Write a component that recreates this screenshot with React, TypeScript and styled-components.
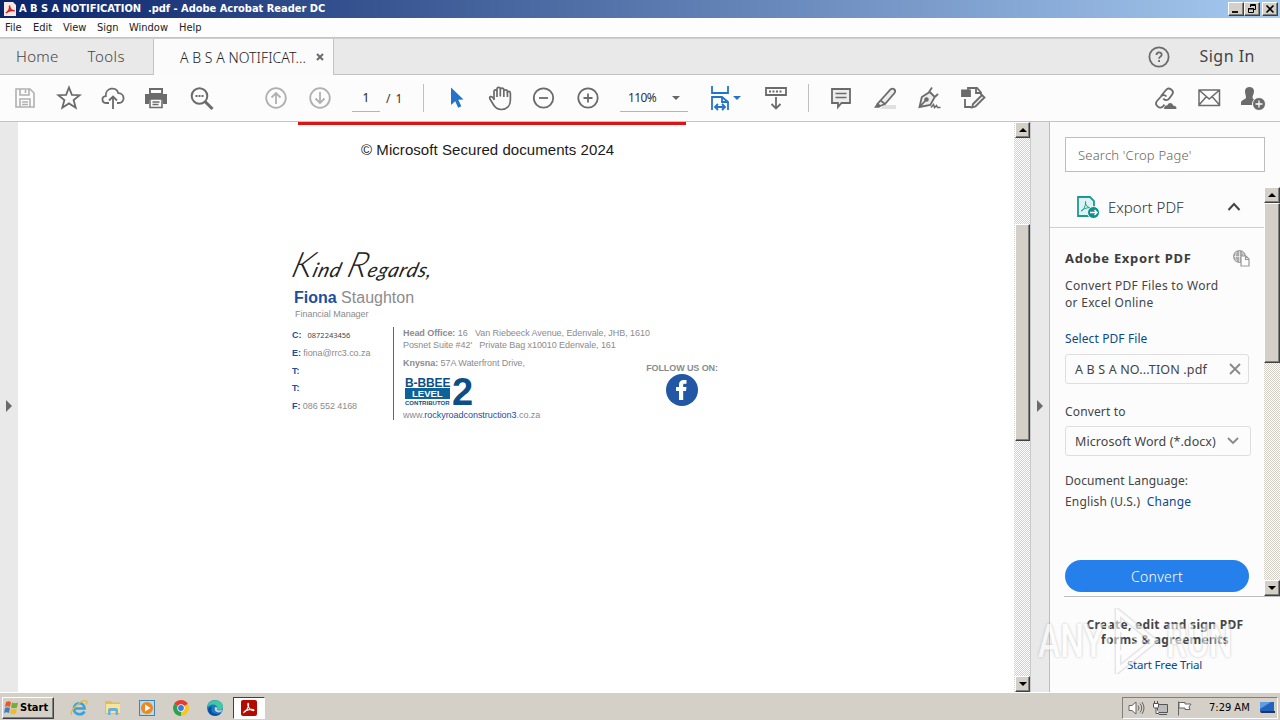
import React, { FC, ReactNode } from 'react';
import styled, { createGlobalStyle, css } from 'styled-components';

const clean = `'Noto Sans', 'Open Sans', sans-serif`;
const tahoma = `'DejaVu Sans Condensed', 'DejaVu Sans', sans-serif`;
const arial = `'Liberation Sans', Arial, sans-serif`;

type TextProps = { $track?: number };

const tracking = css<TextProps>`
  letter-spacing: ${({ $track = 0 }) => $track}px;
`;

const GlobalStyle = createGlobalStyle`
  * {
    box-sizing: border-box;
  }
  body {
    margin: 0;
    overflow: hidden;
    background: #fff;
    font-family: ${clean};
    color: #4b4b4b;
  }
  svg {
    display: block;
    flex: none;
  }
  button {
    padding: 0;
    border: 0;
    background: none;
    font: inherit;
    color: inherit;
  }
`;

const Screen = styled.div`
  position: relative;
  width: 1280px;
  height: 720px;
  display: flex;
  flex-direction: column;
  white-space: pre;
`;

/* window chrome */

const TitleBar = styled.header`
  height: 18px;
  display: flex;
  align-items: center;
  padding: 0 2px 0 4px;
  background: linear-gradient(90deg, #0a246a, #a6caf0);
`;

const TitleText = styled.div<TextProps>`
  flex: 1;
  margin-left: 3px;
  font: bold 11px/18px ${tahoma};
  color: #fff;
  ${tracking}
`;

const raised = css`
  background: #d4d0c8;
  border: 1px solid;
  border-color: #fff #404040 #404040 #fff;
  box-shadow: inset -1px -1px 0 #808080;
`;

const WindowButton = styled.button<{ $gap?: boolean }>`
  ${raised}
  width: 16px;
  height: 14px;
  margin-left: ${({ $gap }) => ($gap ? 2 : 0)}px;
  display: flex;
  align-items: center;
  justify-content: center;
`;

const MenuBar = styled.nav`
  height: 20px;
  display: flex;
  padding-left: 5px;
  background: #fdfdfd;
  border-bottom: 1px solid #c4c4c4;
`;

const MenuItem = styled.span<TextProps & { $width: number }>`
  width: ${({ $width }) => $width}px;
  font: 11px/20px ${tahoma};
  color: #222;
  ${tracking}
`;

const TabBar = styled.nav`
  height: 37px;
  display: flex;
  background: #e9e9e9;
  border-top: 1px solid #cfcfcf;
`;

const NavTabs = styled.div`
  width: 154px;
  display: flex;
  gap: 29px;
  padding-left: 16px;
  border-right: 1px solid #c3c3c3;
  border-bottom: 1px solid #c3c3c3;
`;

const NavTab = styled.span<TextProps>`
  font-size: 15px;
  line-height: 35px;
  color: #444;
  font-weight: 300;
  ${tracking}
`;

const ActiveTab = styled.div`
  width: 180px;
  display: flex;
  align-items: center;
  justify-content: space-between;
  padding: 0 9px 0 26px;
  background: #fbfbfb;
  border-right: 1px solid #c3c3c3;
`;

const ActiveTabName = styled.span<TextProps>`
  font-size: 14px;
  line-height: 35px;
  color: #222;
  font-weight: 300;
  ${tracking}
`;

const TabBarRight = styled.div`
  flex: 1;
  display: flex;
  align-items: center;
  justify-content: flex-end;
  gap: 29px;
  padding-right: 25px;
  border-bottom: 1px solid #c3c3c3;
`;

const SignIn = styled.span<TextProps>`
  font-size: 16px;
  line-height: 35px;
  color: #444;
  ${tracking}
`;

/* toolbar */

const ToolBar = styled.div`
  height: 47px;
  display: flex;
  align-items: center;
  padding: 0 5px 0 3px;
  background: #fcfcfc;
  border-bottom: 1px solid #c3c3c3;
`;

const Tool = styled.button<{ $left?: number }>`
  width: 44px;
  height: 44px;
  margin-left: ${({ $left = 0 }) => $left}px;
  display: flex;
  align-items: center;
  justify-content: center;
`;

const PageField = styled.span`
  width: 28px;
  height: 28px;
  margin-left: 10px;
  border-bottom: 1px solid #b5b5b5;
  font-size: 12px;
  line-height: 28px;
  text-align: center;
  color: #222;
`;

const PageTotal = styled.span`
  width: 37px;
  margin-left: 6px;
  font-size: 12px;
  letter-spacing: 1px;
  color: #333;
`;

const Separator = styled.span<{ $left?: number }>`
  width: 1px;
  height: 28px;
  margin-left: ${({ $left = 0 }) => $left}px;
  margin-right: 10px;
  background: #c0c0c0;
`;

const ZoomField = styled.div`
  width: 68px;
  height: 28px;
  margin-left: 10px;
  padding: 0 8px;
  display: flex;
  align-items: center;
  justify-content: space-between;
  border-bottom: 1px solid #b5b5b5;
  font-size: 12px;
  letter-spacing: -0.6px;
  color: #333;
`;

const Caret = styled.span<{ $color?: string }>`
  border: 4px solid transparent;
  border-top-color: ${({ $color = '#666' }) => $color};
  border-bottom: 0;
`;

const Spacer = styled.span`
  flex: 1;
`;

/* document area */

const Workspace = styled.main`
  height: 570px;
  display: flex;
`;

const Gutter = styled.div<{ $side: 'left' | 'right' }>`
  width: ${({ $side }) => ($side === 'left' ? 18 : 19)}px;
  display: flex;
  align-items: center;
  justify-content: center;
  background: #e9e9e9;
  ${({ $side }) => $side === 'right' && 'border-right: 1px solid #bdbdbd;'}

  &::after {
    content: '';
    margin-top: -2px;
    border: 6px solid transparent;
    border-left-color: #6b6b6b;
    border-right: 0;
  }
`;

const Page = styled.article`
  width: 996px;
  background: #fff;
`;

const RedRule = styled.div`
  width: 388px;
  height: 3px;
  margin-left: 280px;
  background: #e01212;
`;

const Copyright = styled.p<TextProps>`
  margin: 15px 0 0 343px;
  font: 15px/20px ${arial};
  color: #1a1a1a;
  ${tracking}
`;

const Signature = styled.section`
  margin: 83px 0 0 273px;
  font-family: ${arial};
  color: #8b8b8d;
`;

const Handwriting = styled.div<TextProps>`
  height: 40px;
  width: max-content;
  padding-left: 3px;
  font: italic 400 20px/40px Lato, ${arial};
  color: #222;
  transform: skewX(-16deg);
  ${tracking}
`;

const Initial = styled.span`
  font-size: 35px;
  font-weight: 300;
`;

const SignerName = styled.div<TextProps>`
  margin: 5px 0 0 3px;
  font-size: 16px;
  line-height: 20px;
  ${tracking}

  b {
    color: #1a4fa0;
  }
`;

const SignerRole = styled.div<TextProps>`
  margin-left: 4px;
  font-size: 9px;
  line-height: 12px;
  ${tracking}
`;

const SignatureColumns = styled.div`
  height: 93px;
  margin-top: 7px;
  display: flex;
`;

const Contacts = styled.div`
  width: 103px;
  padding-left: 1px;
  border-right: 1px solid #66666a;
`;

const Contact = styled.div<TextProps>`
  height: 17.8px;
  font-size: 9px;
  line-height: 17.8px;
  ${tracking}

  b {
    color: #1a4fa0;
  }
`;

const PhoneNumber = styled.span`
  margin-left: 6px;
  font: 7.5px ${clean};
  letter-spacing: 0;
  color: #444;
`;

const Offices = styled.div`
  width: 252px;
  padding-left: 9px;
`;

const OfficeLine = styled.div<TextProps & { $top?: number }>`
  margin-top: ${({ $top = 0 }) => $top}px;
  font-size: 9px;
  line-height: 12px;
  ${tracking}
`;

const WebsiteName = styled.span`
  color: #1a4fa0;
`;

const Badge = styled.div`
  height: 31px;
  margin: 7px 0 2px 2px;
  display: flex;
  gap: 2px;
  font-weight: bold;
  color: #0c4f86;
`;

const BadgeWords = styled.div`
  width: 45px;
  display: flex;
  flex-direction: column;
`;

const BadgeTitle = styled.span<TextProps>`
  height: 12px;
  font-size: 12px;
  line-height: 14px;
  ${tracking}
`;

const BadgeLevel = styled.span`
  height: 11px;
  padding-left: 7px;
  background: #0e6199;
  color: #fff;
  font-size: 9.5px;
  line-height: 11px;
`;

const BadgeNote = styled.span<TextProps>`
  font-size: 6px;
  line-height: 8px;
  ${tracking}
`;

const BadgeNumber = styled.span`
  font-size: 38px;
  line-height: 33px;
  letter-spacing: -1px;
`;

const Follow = styled.div<TextProps>`
  width: 72px;
  margin-top: 35px;
  display: flex;
  flex-direction: column;
  align-items: center;
  font-size: 9px;
  font-weight: bold;
  line-height: 12px;
  ${tracking}
`;

/* scrollbars */

const Track = styled.div<{ $height?: number }>`
  width: ${({ $height }) => ($height ? 16 : 17)}px;
  height: ${({ $height = 570 }) => $height}px;
  padding-left: ${({ $height }) => ($height ? 0 : 1)}px;
  border-right: ${({ $height }) => ($height ? 0 : 1)}px solid #c9c9c9;
  display: flex;
  flex-direction: column;
  background: repeating-conic-gradient(#d4d0c8 0 25%, #fff 0 50%) 0 0 / 2px 2px;
`;

const ArrowButton = styled.button<{ $down?: boolean }>`
  ${raised}
  height: 16px;
  display: flex;
  align-items: center;
  justify-content: center;

  &::after {
    content: '';
    border: 4px solid transparent;
    ${({ $down }) =>
      $down
        ? 'border-top-color: #000; border-bottom: 0;'
        : 'border-bottom-color: #000; border-top: 0;'}
  }
`;

const Thumb = styled.div<{ $top: number; $height: number }>`
  ${raised}
  margin-top: ${({ $top }) => $top}px;
  height: ${({ $height }) => $height}px;
`;

/* tools pane */

const Pane = styled.aside`
  flex: 1;
  display: flex;
  flex-direction: column;
  background: #fcfcfc;
`;

const SearchBox = styled.div<TextProps>`
  width: 200px;
  height: 35px;
  margin: 15px 0 15px 15px;
  padding-left: 12px;
  border: 1px solid #bdbdbd;
  background: #fff;
  font-size: 13px;
  line-height: 34px;
  font-weight: 300;
  color: #666;
  ${tracking}
`;

const PaneBody = styled.div`
  height: 409px;
  display: flex;
`;

const PaneContent = styled.div`
  width: 214px;
`;

const PaneHeader = styled.div<TextProps>`
  height: 41px;
  display: flex;
  align-items: center;
  padding: 0 23px 0 26px;
  border-bottom: 1px solid #cfcfcf;
  font-size: 15px;
  font-weight: 300;
  color: #333;
  ${tracking}

  span {
    flex: 1;
    margin-left: 8px;
  }
`;

const ExportForm = styled.div`
  padding: 20px 0 0 15px;
`;

const FormHeading = styled.div<TextProps>`
  width: 185px;
  display: flex;
  align-items: center;
  justify-content: space-between;
  font-size: 13px;
  font-weight: bold;
  line-height: 20px;
  color: #3d3d3d;
  ${tracking}
`;

const FormText = styled.div<TextProps & { $top: number }>`
  margin-top: ${({ $top }) => $top}px;
  font-size: 12px;
  line-height: 17px;
  color: #444;
  ${tracking}
`;

const Link = styled.a`
  color: #0b4a8c;
`;

const FormBox = styled.div<TextProps & { $width: number; $top: number }>`
  width: ${({ $width }) => $width}px;
  height: 30px;
  margin-top: ${({ $top }) => $top}px;
  padding: 0 7px 0 9px;
  display: flex;
  align-items: center;
  justify-content: space-between;
  border: 1px solid #dedede;
  border-radius: 3px;
  font-size: 12.5px;
  color: #444;
  ${tracking}
`;

const ConvertButton = styled.button`
  display: block;
  width: 184px;
  height: 32px;
  margin-top: 50px;
  border-radius: 16px;
  background: #2680eb;
  color: #fff;
  font-size: 14px;
  font-weight: 300;
  letter-spacing: 0.3px;
`;

const PaneFooter = styled.div`
  margin-left: 14px;
  padding: 20px 0 0 1px;
  width: 216px;
  flex: 1;
  border-top: 1px solid #bdbdbd;
`;

const FooterPitch = styled.div<TextProps>`
  width: 200px;
  text-align: center;
  font-size: 12px;
  font-weight: bold;
  line-height: 15px;
  color: #444;
  ${tracking}
`;

const FooterLink = styled(Link)<TextProps>`
  display: block;
  width: 199px;
  margin-top: 9px;
  text-align: center;
  font-size: 11.5px;
  line-height: 18px;
  ${tracking}
`;

const Watermark = styled.div`
  position: absolute;
  left: 1038px;
  top: 608px;
  width: 194px;
  height: 66px;
  display: flex;
  align-items: center;
  justify-content: space-between;
  pointer-events: none;
  opacity: 0.6;
`;

const WatermarkWord = styled.span<{ $width: number }>`
  width: ${({ $width }) => $width}px;
  font: 500 47px/66px Roboto, sans-serif;
  color: #fff;
  text-shadow: 0 0 3px #999;
  transform: scaleX(0.71);
  transform-origin: left;
`;

/* taskbar */

const TaskBar = styled.footer`
  height: 28px;
  display: flex;
  align-items: center;
  padding: 2px 2px 0;
  background: #d4d0c8;
  border-top: 1px solid #fff;
`;

const StartButton = styled.button`
  ${raised}
  width: 52px;
  height: 22px;
  margin-right: 8px;
  display: flex;
  align-items: center;
  gap: 1px;
  font: bold 11px ${tahoma};
  color: #000;
`;

const TaskIcon = styled.button`
  width: 34px;
  display: flex;
  justify-content: center;
`;

const ActiveTask = styled.button`
  width: 32px;
  height: 22px;
  margin-left: 1px;
  display: flex;
  align-items: center;
  justify-content: center;
  background: #fff;
  border: 1px solid;
  border-color: #404040 #fff #fff #404040;
`;

const Tray = styled.div`
  width: 156px;
  height: 22px;
  padding: 0 2px 0 5px;
  display: flex;
  align-items: center;
  gap: 7px;
  border: 1px solid;
  border-color: #808080 #fff #fff #808080;
`;

const Clock = styled.span`
  flex: 1;
  padding-left: 9px;
  font: 11px ${tahoma};
  color: #000;
`;

type IconProps = { w?: number; h?: number; color?: string; stroke?: number; children: ReactNode };

const Icon: FC<IconProps> = ({ w = 26, h = 26, color = '#6b6b6b', stroke = 1.8, children }) => (
  <svg width={w} height={h} viewBox={`0 0 ${w} ${h}`} fill="none" stroke={color} strokeWidth={stroke}>
    {children}
  </svg>
);

const App: FC = () => {
  return (
    <>
      <GlobalStyle />
      <Screen>
        <TitleBar>
          <svg width="12" height="16" viewBox="0 0 12 16">
            <path d="M0 1h9l3 3v11H0z" fill="#f6e8e6" />
            <path
              d="M2 12C5 10 6 7 5.500 4.500M5.500 5C6 8 8 10 10.500 9.800 8 8.800 4 10 2 12"
              fill="none"
              stroke="#d2231a"
              strokeWidth="1.500"
            />
          </svg>
          <TitleText $track={-0.02}>A B S A NOTIFICATION  .pdf - Adobe Acrobat Reader DC</TitleText>
          <WindowButton>
            <Icon w={10} h={10} color="#000">
              <path d="M1 8h6" />
            </Icon>
          </WindowButton>
          <WindowButton>
            <Icon w={10} h={10} color="#000" stroke={1}>
              <path d="M3.500 3V.5h5v5H7M3 1.500h6M1.500 4.500h5v4h-5zM1 5h6" />
            </Icon>
          </WindowButton>
          <WindowButton $gap>
            <Icon w={10} h={10} color="#000" stroke={1.6}>
              <path d="m1.500 1.500 7 7m0-7-7 7" />
            </Icon>
          </WindowButton>
        </TitleBar>
        <MenuBar>
          <MenuItem $width={28}>File</MenuItem>
          <MenuItem $width={30}>Edit</MenuItem>
          <MenuItem $width={34}>View</MenuItem>
          <MenuItem $width={32}>Sign</MenuItem>
          <MenuItem $width={50}>Window</MenuItem>
          <MenuItem $width={30}>Help</MenuItem>
        </MenuBar>
        <TabBar>
          <NavTabs>
            <NavTab $track={0.3}>Home</NavTab>
            <NavTab $track={0.45}>Tools</NavTab>
          </NavTabs>
          <ActiveTab>
            <ActiveTabName $track={0.05}>A B S A NOTIFICAT...</ActiveTabName>
            <Icon w={8} h={8} stroke={2}>
              <path d="m1 1 6 6m0-6-6 6" />
            </Icon>
          </ActiveTab>
          <TabBarRight>
            <Icon w={22} h={22}>
              <circle cx="11" cy="11" r="9.600" />
              <path d="M8.500 9c0-3.500 5.200-3.300 5.200-.3 0 2-2.600 1.900-2.600 4M11.100 14v2" />
            </Icon>
            <SignIn $track={0.5}>Sign In</SignIn>
          </TabBarRight>
        </TabBar>

        <ToolBar>
          <Tool>
            <Icon color="#b0b0b0" stroke={1.6}>
              <path d="M4 4h14l4 4v14H4zM8 4v6h9V4M8 22v-8h10v8M13.500 5v3M10 17h6M10 19.500h6" />
            </Icon>
          </Tool>
          <Tool>
            <Icon>
              <path d="m13 2.500 2.900 7.300 7.800.4-6.100 4.900 2.100 7.600L13 18.400l-6.700 4.300 2.100-7.600-6.100-4.900 7.800-.4z" />
            </Icon>
          </Tool>
          <Tool>
            <Icon>
              <path d="M9 18H6.500C1.500 18 1 11.800 5.800 11.200 5 2.500 16.500 1 18.300 8.200c7 .3 7 9.800.2 9.800H17M13 24V11.500m-4 4 4-4 4 4" />
            </Icon>
          </Tool>
          <Tool>
            <Icon>
              <path d="M5 3h14v5H5zM1 9h22v10h-4v-4H5v4H1z" fill="#6b6b6b" stroke="none" />
              <path d="M6 4h12v5H6z" fill="#fcfcfc" />
              <path d="M6 14h12v8.500H6zM8.500 17h7M8.500 19.500h6" fill="#fcfcfc" strokeWidth="1.600" />
            </Icon>
          </Tool>
          <Tool>
            <Icon stroke={2}>
              <circle cx="11.500" cy="11" r="7.800" />
              <path d="m17 16.500 7.500 7.500" strokeWidth="3" />
              <path d="M7.500 11h8" strokeDasharray="2 1" />
            </Icon>
          </Tool>
          <Tool $left={31}>
            <Icon color="#b0b0b0">
              <circle cx="13" cy="13" r="9.800" />
              <path d="M13 19V8m-4.500 4.500L13 8l4.500 4.500" />
            </Icon>
          </Tool>
          <Tool>
            <Icon color="#b0b0b0">
              <circle cx="13" cy="13" r="9.800" />
              <path d="M13 7v11m-4.500-4.500L13 18l4.500-4.500" />
            </Icon>
          </Tool>
          <PageField>1</PageField>
          <PageTotal>/ 1</PageTotal>
          <Separator />
          <Tool>
            <Icon>
              <path d="m8 2.500 12.500 12-5.300.3 3.200 6.500-3.200 1.500-3-6.600L8 20z" fill="#2273c9" stroke="none" />
            </Icon>
          </Tool>
          <Tool>
            <Icon stroke={1.7}>
              <path d="M7 15V6.500c0-2.300 3-2.300 3 0V12M10 6.500V4c0-2.300 3.300-2.300 3.300 0v7.500M13.300 5c0-2.500 3.500-2.500 3.500 0v7M16.800 6.500c0-2.300 3.600-2.300 3.600 0M20.400 8c0-2.300 3-2 3 .5V15c0 6-3.600 9.500-9.100 9.500-4.500 0-6.300-2-8-5L3 14c-1.300-2.500 1.500-3.300 3-1.300l1.500 2" />
              <path d="M20.400 6.500V12" />
            </Icon>
          </Tool>
          <Tool>
            <Icon>
              <circle cx="12.500" cy="13" r="9.700" />
              <path d="M8 13h9" />
            </Icon>
          </Tool>
          <Tool>
            <Icon>
              <circle cx="13" cy="13" r="9.700" />
              <path d="M8.500 13h9M13 8.500v9" />
            </Icon>
          </Tool>
          <ZoomField>
            110%
            <Caret />
          </ZoomField>
          <Tool $left={14}>
            <Icon color="#2273c9">
              <path d="M5 1v7h16V1M5 25V12h10l6 5v8M15 12v5h6M8 22h10m-7-3-3 3 3 3m4-6 3 3-3 3" />
            </Icon>
            <Caret $color="#2273c9" />
          </Tool>
          <Tool $left={8}>
            <Icon>
              <path d="M3 3h20v7H3zM13 12v11m-4.500-4 4.500 4.500 4.500-4.500" />
              <path d="M6 6.500h14" strokeDasharray="2 1.500" />
            </Icon>
          </Tool>
          <Separator $left={10} />
          <Tool>
            <Icon>
              <path d="M4 4h18v14h-8.500L10 22v-4H4z" fill="#ededed" />
              <path d="M7.500 8.500h11m-11 4h11" strokeWidth="1.500" />
            </Icon>
          </Tool>
          <Tool>
            <Icon>
              <path d="M12 20h12v4H8z" fill="#e0e0e0" stroke="none" />
              <path d="m8.500 15.500 10-11c2.500-2.300 6 .5 4 3.500l-9.500 11zM8.500 15.500 5.500 19l2.500 2 5-2" fill="#ededed" />
              <path d="m5 18.500 3.500 3-1.300 1.300H2z" fill="#6b6b6b" stroke="none" />
            </Icon>
          </Tool>
          <Tool>
            <Icon>
              <path d="M3.500 22 5.800 12l8-5 5 5-4.500 8zM3.500 22l6.500-7M13 7l3-4.500M18.800 12l3.200-3" fill="#ededed" />
              <circle cx="10.500" cy="14.500" r="1.400" fill="#6b6b6b" />
              <path d="m15 22.500 2.500-3 1 3 2-2 1 2h3" strokeWidth="1.500" />
            </Icon>
          </Tool>
          <Tool>
            <Icon>
              <path d="M2 5.500h8V11H2z" fill="#6b6b6b" />
              <path d="M8 6V3h9l4 4.500V10M16 3v5h5M5 14v8h6" />
              <path d="m13 19 9-9 2.500 2.500-9 9-3.500 1z" fill="#ededed" />
            </Icon>
          </Tool>
          <Spacer />
          <Tool>
            <Icon>
              <path d="m9 11 5-6c3-3.500 9 .8 6 4.800l-3 4c-1.500 2-4.500 1.700-5.700-.3M14.500 11.500c-1.500-1.800-4-1.800-5.500 0l-4 4.500c-3 3.800 2.500 8.800 6 5.300l1.500-1.600" />
              <path d="M12 24c0-3 2-4 3.500-3.800 1-3.700 5.500-2.500 5.500.3 3-.2 4.500 3.500 3 3.500z" fill="#6b6b6b" stroke="none" />
            </Icon>
          </Tool>
          <Tool>
            <Icon>
              <path d="M3 5h20.500v15.500H3zM3 5l10.200 9L23.500 5M3 20l7.500-8.500m5.500 0 7.500 8.500" strokeWidth="1.500" />
            </Icon>
          </Tool>
          <Tool>
            <Icon>
              <path
                d="M5 6c0-5.500 9-5.500 9 0 0 3-1.500 4.500-1.500 6.500 0 2 4 2 4 6V20H1v-2c0-3.500 5-3.500 5-5.500S5 9 5 6z"
                fill="#6b6b6b"
                stroke="none"
              />
              <circle cx="19" cy="19" r="6.500" fill="#6b6b6b" stroke="#fcfcfc" strokeWidth="1" />
              <path d="M15.500 19h7M19 15.500v7" stroke="#fff" strokeWidth="1.300" />
            </Icon>
          </Tool>
        </ToolBar>

        <Workspace>
          <Gutter $side="left" />
          <Page>
            <RedRule />
            <Copyright $track={0.06}>© Microsoft Secured documents 2024</Copyright>
            <Signature>
              <Handwriting $track={0.9}>
                <Initial>K</Initial>ind <Initial>R</Initial>egards,
              </Handwriting>
              <SignerName>
                <b>Fiona</b> Staughton
              </SignerName>
              <SignerRole $track={-0.03}>Financial Manager</SignerRole>
              <SignatureColumns>
                <Contacts>
                  <Contact>
                    <b>C:</b>
                    <PhoneNumber>0872243456</PhoneNumber>
                  </Contact>
                  <Contact $track={-0.07}>
                    <b>E:</b> fiona@rrc3.co.za
                  </Contact>
                  <Contact>
                    <b>T:</b>
                  </Contact>
                  <Contact>
                    <b>T:</b>
                  </Contact>
                  <Contact $track={-0.07}>
                    <b>F:</b> 086 552 4168
                  </Contact>
                </Contacts>
                <Offices>
                  <OfficeLine $track={-0.06}>
                    <b>Head Office:</b> 16   Van Riebeeck Avenue, Edenvale, JHB, 1610
                  </OfficeLine>
                  <OfficeLine $track={-0.07}>Posnet Suite #42'   Private Bag x10010 Edenvale, 161</OfficeLine>
                  <OfficeLine $top={6} $track={-0.06}>
                    <b>Knysna:</b> 57A Waterfront Drive,
                  </OfficeLine>
                  <Badge>
                    <BadgeWords>
                      <BadgeTitle $track={-0.1}>B-BBEE</BadgeTitle>
                      <BadgeLevel>LEVEL</BadgeLevel>
                      <BadgeNote $track={0.03}>CONTRIBUTOR</BadgeNote>
                    </BadgeWords>
                    <BadgeNumber>2</BadgeNumber>
                  </Badge>
                  <OfficeLine $track={-0.04}>
                    www.<WebsiteName>rockyroadconstruction3</WebsiteName>.co.za
                  </OfficeLine>
                </Offices>
                <Follow $track={-0.1}>
                  FOLLOW US ON:
                  <svg width="32" height="32" viewBox="0 0 32 32">
                    <circle cx="16" cy="16" r="16" fill="#2257a5" />
                    <path
                      d="M13 26V17h-3v-4h3v-2.500C13 7.500 15 6 17.500 6H20.500v3.800h-2c-1 0-1.300.5-1.300 1.400V13H20.500l-.5 4h-2.800v9z"
                      fill="#fff"
                    />
                  </svg>
                </Follow>
              </SignatureColumns>
            </Signature>
          </Page>
          <Track>
            <ArrowButton />
            <Thumb $top={86} $height={217} />
            <Spacer />
            <ArrowButton $down />
          </Track>
          <Gutter $side="right" />
          <Pane>
            <SearchBox $track={0.2}>Search 'Crop Page'</SearchBox>
            <PaneBody>
              <PaneContent>
                <PaneHeader>
                  <Icon w={24} h={24} color="#1d9992">
                    <path d="M2 2h12l4 4v15H2z" fill="#dcf3f2" />
                    <path d="M5 16c3-1 5-6 4.500-9.500C9 10 12 13 15.500 13 12 12 8 13.500 5 16z" strokeWidth="1" />
                    <circle cx="17.500" cy="17.500" r="6" fill="#12918a" stroke="#fcfcfc" strokeWidth="1" />
                    <path d="M14 17.500h7m-2.500-2.500 2.500 2.500-2.500 2.500" stroke="#fff" strokeWidth="1.400" />
                  </Icon>
                  <span>Export PDF</span>
                  <Icon w={14} h={10} color="#444" stroke={2}>
                    <path d="m1.500 8 5.500-6 5.500 6" />
                  </Icon>
                </PaneHeader>
                <ExportForm>
                  <FormHeading $track={0.7}>
                    Adobe Export PDF
                    <Icon w={17} h={17} color="#999" stroke={1.2}>
                      <circle cx="6.500" cy="6.500" r="5.800" fill="#aaa" />
                      <path
                        d="M1 6.500h11M6.500 1v11M3.500 2c-1.500 3-1.500 6 0 9M9.500 2c1.500 3 1.500 6 0 9"
                        stroke="#eee"
                        strokeWidth=".8"
                      />
                      <path d="M8 6h5l3 3v7H8zM12.500 6v3.500H16" fill="#fff" />
                    </Icon>
                  </FormHeading>
                  <FormText $top={9} $track={0.3}>
                    {'Convert PDF Files to Word\nor Excel Online'}
                  </FormText>
                  <FormText $top={19} $track={0.1}>
                    <Link>Select PDF File</Link>
                  </FormText>
                  <FormBox $width={184} $top={7} $track={0.15}>
                    A B S A NO...TION .pdf
                    <Icon w={12} h={12} color="#888" stroke={1.8}>
                      <path d="m1 1 10 10m0-10L1 11" />
                    </Icon>
                  </FormBox>
                  <FormText $top={19} $track={0.15}>
                    Convert to
                  </FormText>
                  <FormBox $width={186} $top={6} $track={0.08}>
                    Microsoft Word (*.docx)
                    <Icon w={17} h={10} color="#888">
                      <path d="m2 2 5 5 5-5" />
                    </Icon>
                  </FormBox>
                  <FormText $top={16} $track={0.1}>
                    Document Language:
                  </FormText>
                  <FormText $top={4} $track={0.18}>
                    English (U.S.)  <Link>Change</Link>
                  </FormText>
                  <ConvertButton>Convert</ConvertButton>
                </ExportForm>
              </PaneContent>
              <Track $height={409}>
                <ArrowButton />
                <Thumb $top={0} $height={160} />
                <Spacer />
                <ArrowButton $down />
              </Track>
            </PaneBody>
            <PaneFooter>
              <FooterPitch $track={0.3}>{'Create, edit and sign PDF\nforms & agreements'}</FooterPitch>
              <FooterLink $track={-0.2}>Start Free Trial</FooterLink>
            </PaneFooter>
          </Pane>
        </Workspace>

        <TaskBar>
          <StartButton>
            <svg width="16" height="16" viewBox="0 0 16 16">
              <path d="M3 2c2-1 3-1 5 0L7 7c-2-1-3-1-5 0z" fill="#e8582a" />
              <path d="M9 2.500c2 1 4 1 6 0l-1 5c-2 1-4 1-6 0z" fill="#73ae38" />
              <path d="M2 8c2-1 3-1 5 0l-1 5c-2-1-3-1-5 0z" fill="#3e7ec4" />
              <path d="M8 8.500c2 1 4 1 6 0l-1 5c-2 1-4 1-6 0z" fill="#f2bb27" />
            </svg>
            Start
          </StartButton>
          <TaskIcon>
            <svg width="18" height="18" viewBox="0 0 18 18" fill="none">
              <path d="M14.500 12.500C12 17 4 16 4 9.500 4 3 14 2 14.500 9.500H5" stroke="#35a3df" strokeWidth="2.600" />
              <path d="M1.500 16C-.5 12 11 0 16.500 2c1 .6.500 2-.5 3.500" stroke="#e5b93c" strokeWidth="1.300" />
            </svg>
          </TaskIcon>
          <TaskIcon>
            <svg width="18" height="16" viewBox="0 0 18 16">
              <path d="M1 1h6l1 1.500h8V14H1z" fill="#e3bd57" />
              <path d="M2 4h14v9H2z" fill="#f7e39a" />
              <path d="M4 15v-5q0-2 2-2h6q2 0 2 2v5h-2.500v-4h-5v4z" fill="#69b1d6" />
            </svg>
          </TaskIcon>
          <TaskIcon>
            <svg width="16" height="16" viewBox="0 0 16 16">
              <rect x=".5" y=".5" width="15" height="15" fill="#b8d9ee" stroke="#3b86b8" />
              <circle cx="8" cy="8" r="6" fill="#f0861c" />
              <path d="m6 4.500 5.500 3.500L6 11.500z" fill="#fff" />
            </svg>
          </TaskIcon>
          <TaskIcon>
            <svg width="16" height="16" viewBox="0 0 16 16">
              <path d="M8 8 1.100 4A8 8 0 0 1 14.900 4z" fill="#e23d30" />
              <path d="M8 8 14.900 4A8 8 0 0 1 8 16z" fill="#f8c623" />
              <path d="M8 8v8A8 8 0 0 1 1.100 4z" fill="#30a04d" />
              <circle cx="8" cy="8" r="3.700" fill="#fff" />
              <circle cx="8" cy="8" r="2.900" fill="#3b78e0" />
            </svg>
          </TaskIcon>
          <TaskIcon>
            <svg width="16" height="16" viewBox="0 0 16 16">
              <circle cx="8" cy="8" r="8" fill="#167bc7" />
              <path d="M1 5C4-2 16-1 16 7c0 3-4 4-6 2 1-2-1-5-5-4.500Q2 5 .5 7z" fill="#43c7a0" />
              <path d="M5 7c-3 5 3 9 9 6-3 4-12 4-13-3 0-2 2-4 4-3z" fill="#0c4d9e" />
              <path d="M8 7q3 0 2 2.500 2 2 5.500 0-1 3-4 3-5-1-3.500-5.500z" fill="#d4d0c8" />
            </svg>
          </TaskIcon>
          <ActiveTask>
            <svg width="16" height="16" viewBox="0 0 16 16">
              <rect width="16" height="16" rx="2" fill="#b30b00" />
              <path
                d="M3 12.300C5 11.500 8 7 7.600 4.200 7.400 2.600 6.300 3.700 7 5.600c1 2.800 3.400 5 5.400 5 1.800-.6-1.400-1.700-4.500-.9-2.300.5-4.500 1.700-4.900 2.600Z"
                fill="none"
                stroke="#fff"
                strokeWidth="1.200"
              />
            </svg>
          </ActiveTask>
          <Spacer />
          <Tray>
            <svg width="17" height="16" viewBox="0 0 17 16" fill="none" stroke="#666">
              <path d="M1 5.500h3L8 2v12l-4-3.500H1z" fill="#fff" />
              <path d="M10 5.500q2 2.500 0 5M12 3.500q3.500 4.500 0 9M14 2q4 6 0 12" />
            </svg>
            <svg width="17" height="16" viewBox="0 0 17 16" fill="none" stroke="#555">
              <path d="M5.500 4.500h10v8h-10zM7 14.500h8" fill="#bbb" />
              <path d="M1.500 3.500h5V7l-1 1h-3l-1-1zM2.500 1v2m3-2v2M4 8v5.500h3" fill="#fff" />
            </svg>
            <svg width="17" height="16" viewBox="0 0 17 16" stroke="#666">
              <path d="M2.500 1.500v14M3 2.500h6v1.500h6l-2 3 1 2.500H9V8H3z" fill="#fff" />
            </svg>
            <Clock>7:29 AM</Clock>
            <svg width="16" height="15" viewBox="0 0 16 15">
              <path d="M1 2h14v9H1z" fill="#2363bd" />
              <path d="M1 2h11L1 9z" fill="#5d9de6" />
              <path d="M1 11h15v2H2z" fill="#1d3760" />
            </svg>
          </Tray>
        </TaskBar>

        <Watermark>
          <WatermarkWord $width={62}>ANY</WatermarkWord>
          <svg width="58" height="66" viewBox="0 0 58 66" fill="none" stroke="#fff" strokeWidth="4">
            <path d="M14 4 50 33 14 62z" stroke="#d8d8d8" strokeWidth="7" />
            <path d="M14 4 50 33 14 62zM4 13v41M14 20l24 13-24 13" />
          </svg>
          <WatermarkWord $width={66}>RUN</WatermarkWord>
        </Watermark>
      </Screen>
    </>
  );
};

export default App;
